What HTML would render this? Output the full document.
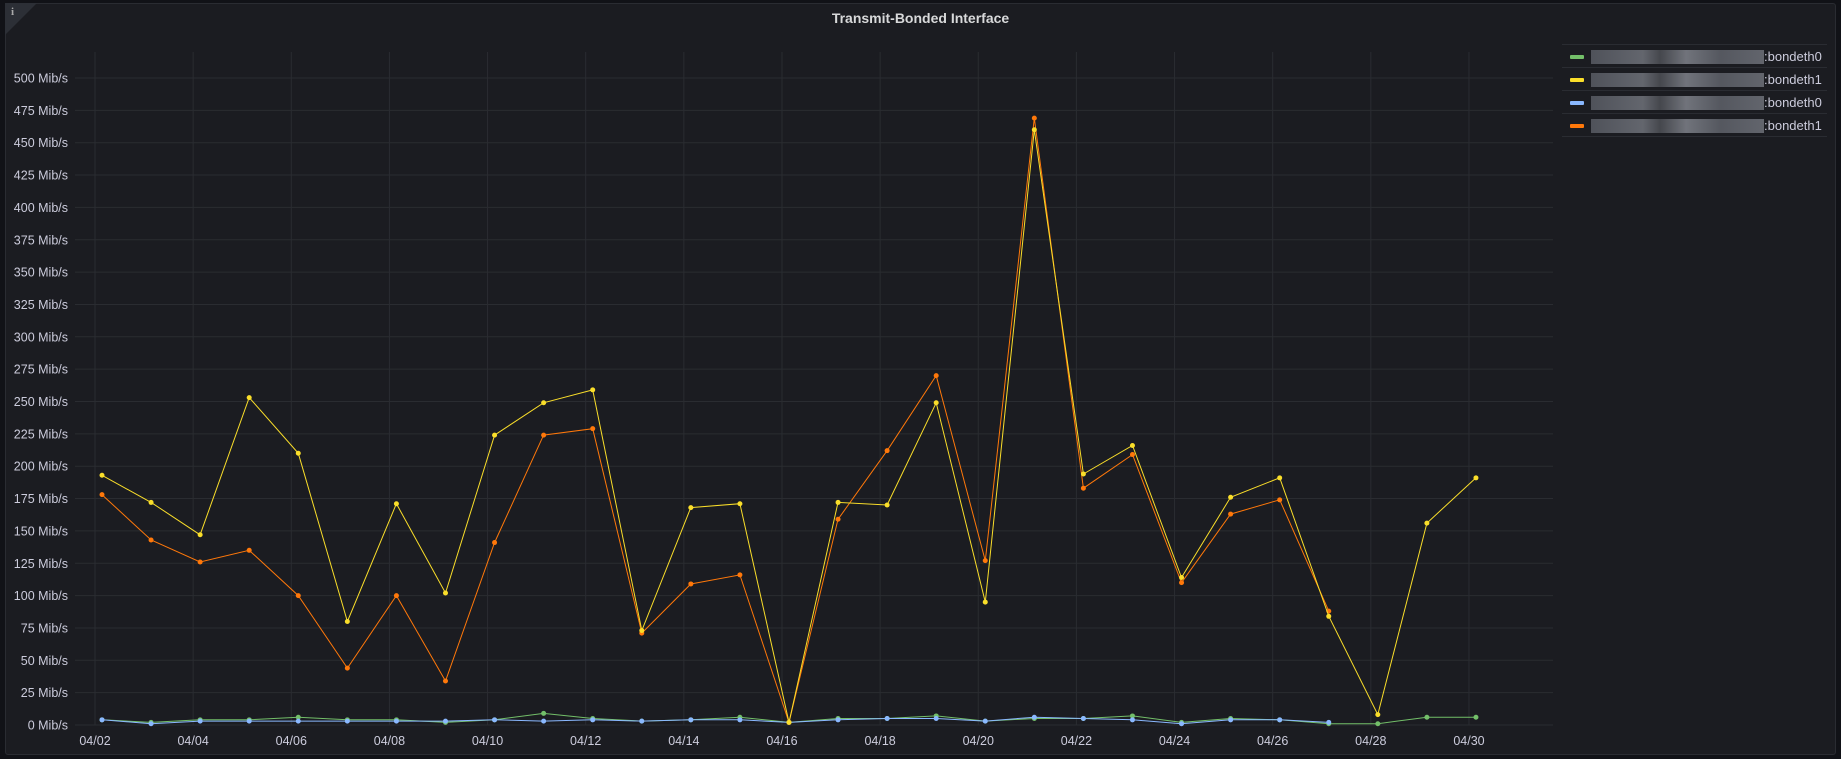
<!DOCTYPE html>
<html><head><meta charset="utf-8"><style>
html,body{margin:0;padding:0;background:#111217;width:1841px;height:759px;overflow:hidden;font-family:"Liberation Sans",sans-serif}
.panel{position:absolute;left:5px;top:3px;width:1829px;height:750px;background:#1b1c21;border:1px solid #2a2c32;border-radius:3px}
.corner{position:absolute;left:5px;top:3px;width:0;height:0;border-top:32px solid #2c2f36;border-right:32px solid transparent}
.ci{position:absolute;left:11px;top:6px;color:#aaa;font-size:11px;font-family:"Liberation Serif",serif;font-weight:bold}
.title{position:absolute;left:0;width:1841px;top:10px;text-align:center;color:#d8d9da;font-size:14px;font-weight:bold}
.leg{position:absolute;left:1562px;width:265px;height:23px;border-top:1px solid #2a2c32;color:#ccccdc;font-size:13px}
.leg .sw{position:absolute;left:8px;top:10px;width:14px;height:4px;border-radius:1px}
.leg .blur{position:absolute;left:29px;top:5px;width:173px;height:14px;background:linear-gradient(90deg,#555860,#6b6e76 30%,#4a4c52 40%,#7a7d85 55%,#5b5e66 75%,#6a6d75);opacity:.9}
.leg .t{position:absolute;left:202px;top:4px}
</style></head><body>
<div class="panel"></div>
<div class="corner"></div><div class="ci">i</div>
<div class="title">Transmit-Bonded Interface</div>
<svg id="g" width="1841" height="759" style="position:absolute;left:0;top:0" font-family="Liberation Sans, sans-serif"></svg>
<div class="leg" style="top:44px"><div class="sw" style="background:#73bf69"></div><div class="blur"></div><div class="t">:bondeth0</div></div>
<div class="leg" style="top:67px"><div class="sw" style="background:#fade2a"></div><div class="blur"></div><div class="t">:bondeth1</div></div>
<div class="leg" style="top:90px"><div class="sw" style="background:#8ab8ff"></div><div class="blur"></div><div class="t">:bondeth0</div></div>
<div class="leg" style="top:113px"><div class="sw" style="background:#ff780a"></div><div class="blur"></div><div class="t">:bondeth1</div></div>
<div class="leg" style="top:136px;height:0"></div>
<script>
var s='',X=function(i){return 102+i*49.07},G=function(d){return 95+d*49.07},Y=function(v){return 725-v*1.294};
for(var k=0;k<=20;k++){var y=Y(k*25);s+='<line x1="75" x2="1553" y1="'+y+'" y2="'+y+'" stroke="#2a2c31"/>';s+='<text x="68" y="'+(y+4.5)+'" text-anchor="end" fill="#ccccdc" font-size="12.5">'+(k*25)+' Mib/s</text>';}
for(var d=0;d<=28;d+=2){var x=G(d);s+='<line x1="'+x+'" x2="'+x+'" y1="52" y2="725" stroke="#2a2c31"/>';s+='<text x="'+x+'" y="745" text-anchor="middle" fill="#ccccdc" font-size="12.5">04/'+String(d+2).padStart(2,'0')+'</text>';}
var S=[["#73bf69",[4,2,4,4,6,4,4,2,4,9,5,3,4,6,2,5,5,7,3,5,5,7,2,5,4,1,1,6,6]],
["#8ab8ff",[4,1,3,3,3,3,3,3,4,3,4,3,4,4,2,4,5,5,3,6,5,4,1,4,4,2]],
["#ff780a",[178,143,126,135,100,44,100,34,141,224,229,71,109,116,2,159,212,270,127,469,183,209,110,163,174,88]],
["#fade2a",[193,172,147,253,210,80,171,102,224,249,259,73,168,171,2,172,170,249,95,460,194,216,114,176,191,84,8,156,191]]];
S.forEach(function(a){var p=a[1].map(function(v,i){return X(i).toFixed(1)+','+Y(v).toFixed(1)}).join(' ');
s+='<polyline points="'+p+'" fill="none" stroke="'+a[0]+'" stroke-width="1"/>';
a[1].forEach(function(v,i){s+='<circle cx="'+X(i)+'" cy="'+Y(v)+'" r="2.5" fill="'+a[0]+'"/>'});});
document.getElementById('g').innerHTML=s;
</script>
</body></html>
